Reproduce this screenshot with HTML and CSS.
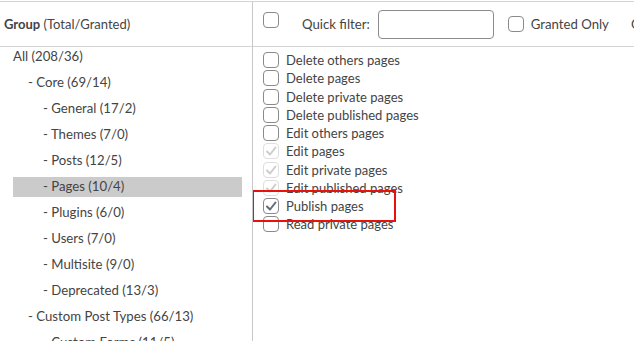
FILE: index.html
```html
<!DOCTYPE html>
<html lang="en">

<head>
    <meta charset="UTF-8">
    <title>Capabilities</title>
    <link rel="stylesheet" href="styles.css">
</head>

<body>
    <div class="editor">
        <div class="groups">
            <div class="groups-head"><span><b>Group</b> (Total/Granted)</span></div>
            <ul class="tree">
                <li class="lvl0">All (208/36)</li>
                <li class="lvl1">- Core (69/14)</li>
                <li class="lvl2">- General (17/2)</li>
                <li class="lvl2">- Themes (7/0)</li>
                <li class="lvl2">- Posts (12/5)</li>
                <li class="lvl2 active">- Pages (10/4)</li>
                <li class="lvl2">- Plugins (6/0)</li>
                <li class="lvl2">- Users (7/0)</li>
                <li class="lvl2">- Multisite (9/0)</li>
                <li class="lvl2">- Deprecated (13/3)</li>
                <li class="lvl1">- Custom Post Types (66/13)</li>
                <li class="lvl2">- Custom Forms (11/5)</li>
            </ul>
        </div>
        <div class="caps">
            <div class="caps-head">
                <span class="box top"></span>
                <label class="filter">Quick filter:</label>
                <input class="filter-input" type="text">
                <span class="box"></span>
                <span class="only">Granted Only</span>
                <span class="more">Columns</span>
            </div>
            <div class="caps-list">
                <div class="cap"><span class="box"></span>Delete others pages</div>
                <div class="cap"><span class="box"></span>Delete pages</div>
                <div class="cap"><span class="box"></span>Delete private pages</div>
                <div class="cap"><span class="box"></span>Delete published pages</div>
                <div class="cap"><span class="box"></span>Edit others pages</div>
                <div class="cap"><span class="box off"><svg viewBox="0 0 14 14"><polyline points="3,7.5 6,10.5 11.5,3.5"/></svg></span>Edit pages</div>
                <div class="cap"><span class="box off"><svg viewBox="0 0 14 14"><polyline points="3,7.5 6,10.5 11.5,3.5"/></svg></span>Edit private pages</div>
                <div class="cap"><span class="box off"><svg viewBox="0 0 14 14"><polyline points="3,7.5 6,10.5 11.5,3.5"/></svg></span>Edit published pages</div>
                <div class="cap"><span class="box on"><svg viewBox="0 0 14 14"><polyline points="3,7.5 6,10.5 11.5,3.5"/></svg></span>Publish pages</div>
                <div class="cap"><span class="box"></span>Read private pages</div>
                <div class="mark"></div>
            </div>
        </div>
    </div>
</body>

</html>
```

FILE: styles.css
```css
body {
    margin: 0;
    font-family: Lato, "Open Sans", sans-serif;
    color: #444;
    background: white;
    overflow: hidden;
}

.editor {
    display: flex;
    margin-top: 1px;
    border-top: 1px solid #d4d4d4;
    height: 400px;
}

.groups {
    width: 252px;
    border-right: 1px solid #c8c8c8;
    flex-shrink: 0;
}

.groups-head,
.caps-head {
    height: 44px;
    border-bottom: 1px solid #d4d4d4;
    display: flex;
    align-items: center;
}

.groups-head {
    padding-left: 4px;
    font-size: 13px;
    color: #444;
}

.groups-head b {
    font-weight: 700;
}

.tree {
    list-style: none;
    margin: 0;
    padding: 0;
    font-size: 13.2px;
}

.tree li {
    height: 20px;
    line-height: 18px;
    margin: 0 10px 6px 13px;
    white-space: nowrap;
}

.tree .lvl1 {
    padding-left: 15px;
}

.tree .lvl2 {
    padding-left: 30px;
}

.tree .active {
    background: #cbcbcb;
}

.caps {
    flex: 1;
    position: relative;
    white-space: nowrap;
    overflow: hidden;
}

.caps-head {
    padding-left: 10px;
    font-size: 13.2px;
}

.caps-head .top {
    align-self: flex-start;
    margin-top: 10px;
}

.filter {
    margin-left: 16px;
    margin-right: 8px;
}

.filter-input {
    width: 116px;
    height: 29px;
    box-sizing: border-box;
    border: 1px solid #8c8c8c;
    border-radius: 4px;
    margin: 0 14px 0 0;
}

.only {
    margin-left: 0;
}

.more {
    margin-left: 22px;
}

.caps-list {
    padding: 4px 0 0 10px;
    font-size: 13px;
}

.cap {
    display: flex;
    align-items: center;
    height: 18.25px;
}

.box {
    display: inline-flex;
    align-items: center;
    justify-content: center;
    width: 14px;
    height: 14px;
    border: 1px solid #8a8a8a;
    border-radius: 4px;
    margin-right: 7px;
    flex-shrink: 0;
    background: white;
}

.box svg {
    width: 14px;
    height: 14px;
    fill: none;
    stroke-width: 2;
    stroke-linecap: round;
    stroke-linejoin: round;
}

.box.off {
    border-color: #dedede;
    stroke: #cdcdcd;
}

.box.on {
    stroke: #5f6b7a;
}

.mark {
    position: absolute;
    left: -1px;
    top: 188px;
    width: 140px;
    height: 28px;
    border: 2px solid #e8120c;
}
```
